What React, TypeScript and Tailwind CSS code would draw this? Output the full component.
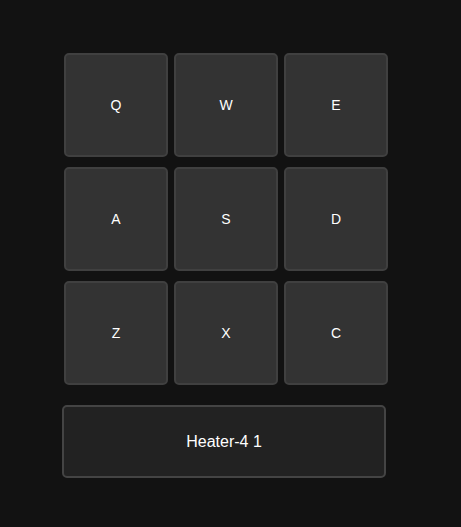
import React from "react";

const keys = ["Q", "W", "E", "A", "S", "D", "Z", "X", "C"];

export default function App() {
  return (
    <div className="min-h-[527px] w-full bg-[#121212] pt-[53px] pl-[62px]" style={{ fontFamily: '"Liberation Sans", Arial, sans-serif' }}>
      <div className="ml-[2px] grid grid-cols-[104px_104px_104px] gap-x-[6px] gap-y-[10px]">
        {keys.map((k) => (
          <div
            key={k}
            className="flex h-[104px] w-[104px] items-center justify-center rounded-[5px] border-2 border-[#404040] bg-[#333333] text-[14px] text-white"
          >
            {k}
          </div>
        ))}
      </div>
      <div className="mt-[20px] flex h-[73px] w-[324px] items-center justify-center rounded-[5px] border-2 border-[#444444] bg-[#222222] text-[16px] text-white">
        Heater-4 1
      </div>
    </div>
  );
}
